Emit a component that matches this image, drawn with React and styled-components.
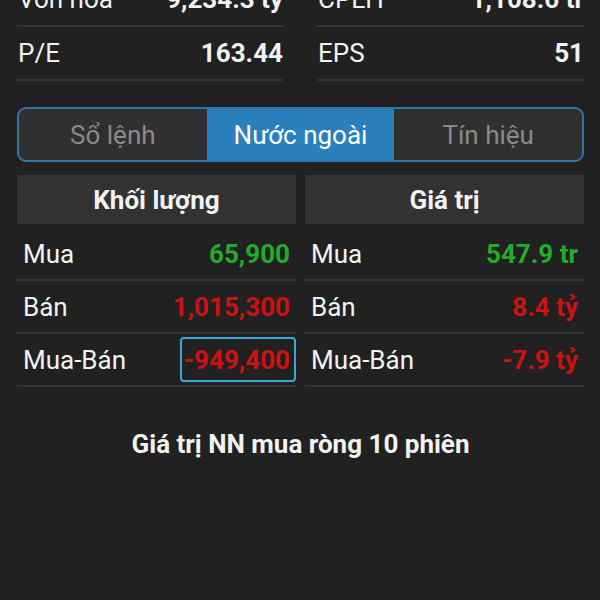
import React from 'react';
import styled, { createGlobalStyle } from 'styled-components';

const GlobalStyle = createGlobalStyle`
  html, body {
    margin: 0;
    padding: 0;
    background: #212121;
  }
  body {
    font-family: Roboto, "Noto Sans", "Liberation Sans", sans-serif;
    color: #f2f2f2;
    overflow: hidden;
  }
`;

const Page = styled.div`
  width: 600px;
  height: 600px;
  padding: 0 16px 0 17px;
  box-sizing: border-box;
  margin-top: -27px;
`;

const StatsGrid = styled.div`
  display: grid;
  grid-template-columns: 266px 267px;
  column-gap: 34px;
`;

const StatRow = styled.div`
  height: 52px;
  border-bottom: 2px solid #333;
  display: flex;
  align-items: center;
  justify-content: space-between;
  font-size: 26px;
`;

const StatLabel = styled.span`
  padding-left: 1px;
`;

const StatValue = styled.span`
  font-weight: 700;
`;

const Tabs = styled.div`
  margin-top: 26px;
  display: flex;
  height: 55px;
  box-sizing: border-box;
  border: 2px solid #2f76a8;
  border-radius: 9px;
  overflow: hidden;
  background: #303030;
`;

const Tab = styled.div`
  flex: 1;
  display: flex;
  align-items: center;
  justify-content: center;
  font-size: 26px;
  color: ${({ active }) => (active ? '#fff' : '#8a8a8a')};
  background: ${({ active }) => (active ? '#2a7fbd' : 'transparent')};
`;

const Columns = styled.div`
  margin-top: 13px;
  display: grid;
  grid-template-columns: 1fr 1fr;
  column-gap: 9px;
`;

const Header = styled.div`
  height: 49px;
  background: #323232;
  display: flex;
  align-items: center;
  justify-content: center;
  font-size: 26px;
  font-weight: 700;
  margin-bottom: 4px;
`;

const Row = styled.div`
  height: 51px;
  border-bottom: 2px solid #333;
  display: flex;
  align-items: center;
  justify-content: space-between;
  padding: 0 6px;
  font-size: 26px;
`;

const Value = styled.span`
  font-weight: 700;
  color: ${({ tone }) => (tone === 'up' ? '#20ad2a' : '#cc1212')};
  ${({ selected }) =>
    selected &&
    `
    margin-right: -6px;
    height: 45px;
    box-sizing: border-box;
    display: flex;
    align-items: center;
    padding: 0 4px 0 2px;
    border: 2px solid #38a8d8;
    border-radius: 4px;
  `}
`;

const Title = styled.div`
  margin-top: 42px;
  text-align: center;
  font-size: 26px;
  font-weight: 700;
`;

const volume = [
  { label: 'Mua', value: '65,900', tone: 'up' },
  { label: 'Bán', value: '1,015,300', tone: 'down' },
  { label: 'Mua-Bán', value: '-949,400', tone: 'down', selected: true },
];

const amount = [
  { label: 'Mua', value: '547.9 tr', tone: 'up' },
  { label: 'Bán', value: '8.4 tỷ', tone: 'down' },
  { label: 'Mua-Bán', value: '-7.9 tỷ', tone: 'down' },
];

const Column = ({ title, rows }) => (
  <div>
    <Header>{title}</Header>
    {rows.map((r) => (
      <Row key={r.label}>
        <span>{r.label}</span>
        <Value tone={r.tone} selected={r.selected}>
          {r.value}
        </Value>
      </Row>
    ))}
  </div>
);

const App = () => (
  <>
    <GlobalStyle />
    <Page>
      <StatsGrid>
        <StatRow>
          <StatLabel>Vốn hóa</StatLabel>
          <StatValue>9,234.3 tỷ</StatValue>
        </StatRow>
        <StatRow>
          <StatLabel>CPLH</StatLabel>
          <StatValue>1,108.6 tr</StatValue>
        </StatRow>
        <StatRow>
          <StatLabel>P/E</StatLabel>
          <StatValue>163.44</StatValue>
        </StatRow>
        <StatRow>
          <StatLabel>EPS</StatLabel>
          <StatValue>51</StatValue>
        </StatRow>
      </StatsGrid>
      <Tabs>
        <Tab>Sổ lệnh</Tab>
        <Tab active>Nước ngoài</Tab>
        <Tab>Tín hiệu</Tab>
      </Tabs>
      <Columns>
        <Column title="Khối lượng" rows={volume} />
        <Column title="Giá trị" rows={amount} />
      </Columns>
      <Title>Giá trị NN mua ròng 10 phiên</Title>
    </Page>
  </>
);

export default App;
